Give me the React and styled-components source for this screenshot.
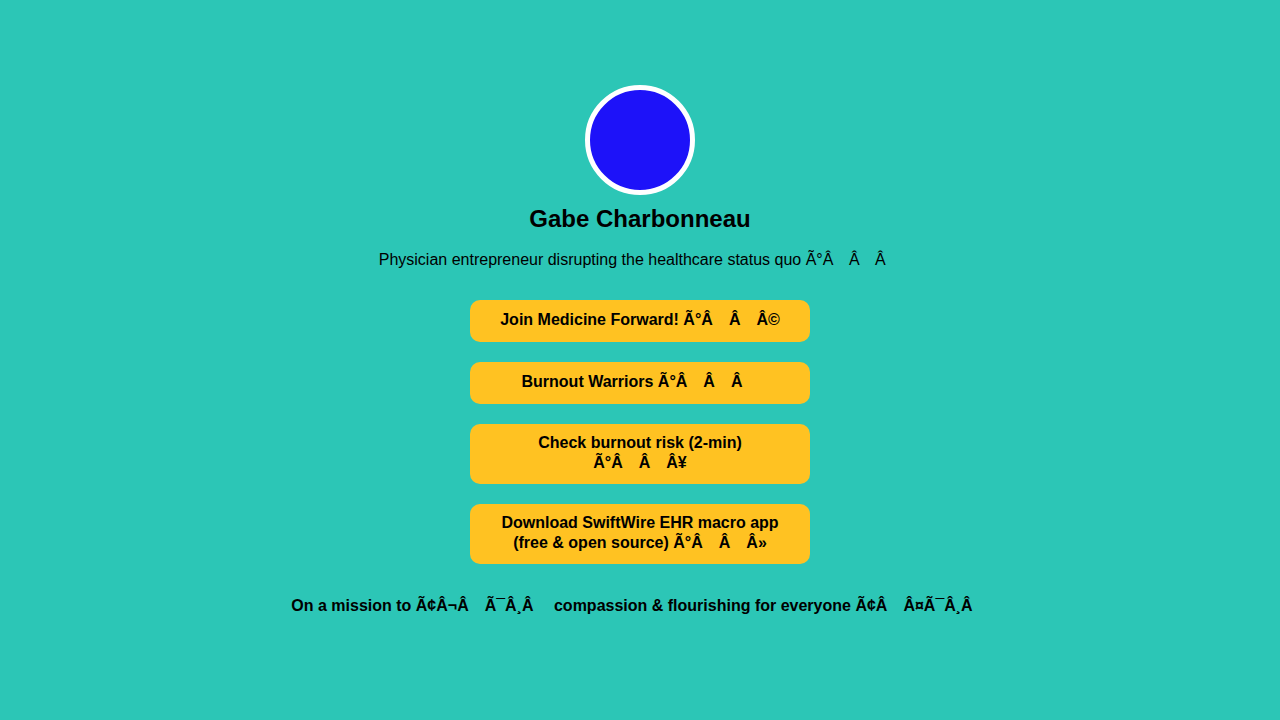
import React from "react";
import styled, { createGlobalStyle } from "styled-components";

const Global = createGlobalStyle`
  html, body { margin: 0; padding: 0; }
  body {
    background: #2cc6b6;
    font-family: "Liberation Sans", Arial, sans-serif;
    color: #000;
  }
`;

const Page = styled.main`
  min-height: 720px;
  box-sizing: border-box;
  padding-top: 85px;
  display: flex;
  flex-direction: column;
  align-items: center;
`;

const Avatar = styled.div`
  width: 100px;
  height: 100px;
  border-radius: 50%;
  border: 5px solid #fff;
  background: #1d12f9;
`;

const Name = styled.h1`
  margin: 10px 0 0;
  font-size: 24px;
  line-height: 28px;
  font-weight: 700;
`;

const Bio = styled.p`
  margin: 18px 0 0;
  font-size: 16px;
  line-height: 18px;
  white-space: pre;
`;

const Links = styled.nav`
  margin-top: 31px;
  display: flex;
  flex-direction: column;
  gap: 20px;
`;

const LinkButton = styled.a`
  box-sizing: border-box;
  width: 340px;
  min-height: 42px;
  padding: 9px 20px 11px;
  border-radius: 10px;
  background: #ffc222;
  color: #000;
  text-decoration: none;
  display: flex;
  align-items: center;
  justify-content: center;
  text-align: center;
  font-weight: 700;
  font-size: 16px;
  line-height: 20px;
`;

const Mission = styled.p`
  margin: 33px 0 0;
  font-size: 16px;
  font-weight: 700;
  line-height: 18px;
  white-space: pre;
`;

const Emo = styled.span`
  white-space: nowrap;
`;

const Gap = styled.span`
  display: inline-block;
  width: ${(p) => (p.$narrow ? "15.5px" : "16px")};
`;

function Garbled({ text, narrow }) {
  const parts = text.split(/([\u0080-\u009f])/);
  return parts.map((p, i) =>
    /^[\u0080-\u009f]$/.test(p) ? <Gap key={i} $narrow={narrow} /> : p
  );
}

function Line({ text, emoji, narrow }) {
  return (
    <span>
      {text}{" "}
      <Emo>
        <Garbled text={emoji} narrow={narrow} />
      </Emo>
    </span>
  );
}

const links = [
  ["Join Medicine Forward!", "\u00c3\u00b0\u00c2\u009f\u00c2\u0092\u00c2\u00a9"],
  ["Burnout Warriors", "\u00c3\u00b0\u00c2\u009f\u00c2\u0092\u00c2\u0096"],
  ["Check burnout risk (2-min)", "\u00c3\u00b0\u00c2\u009f\u00c2\u0094\u00c2\u00a5"],
  ["Download SwiftWire EHR macro app (free & open source)", "\u00c3\u00b0\u00c2\u009f\u00c2\u0092\u00c2\u00bb"],
];

export default function App() {
  return (
    <>
      <Global />
      <Page>
        <Avatar />
        <Name>Gabe Charbonneau</Name>
        <Bio>
          <Line
            narrow
            text="Physician entrepreneur disrupting the healthcare status quo"
            emoji={"\u00c3\u00b0\u00c2\u009f\u00c2\u009a\u00c2\u0080"}
          />
        </Bio>
        <Links>
          {links.map(([t, e]) => (
            <LinkButton key={t} href="#">
              <Line text={t} emoji={e} />
            </LinkButton>
          ))}
        </Links>
        <Mission>
          On a mission to{" "}
          <Garbled text={"\u00c3\u00a2\u00c2\u00ac\u00c2\u0086\u00c3\u00af\u00c2\u00b8\u00c2\u008f"} />{" "}
          compassion &amp; flourishing for everyone{" "}
          <Garbled text={"\u00c3\u00a2\u00c2\u009d\u00c2\u00a4\u00c3\u00af\u00c2\u00b8\u00c2\u008f"} />
        </Mission>
      </Page>
    </>
  );
}
